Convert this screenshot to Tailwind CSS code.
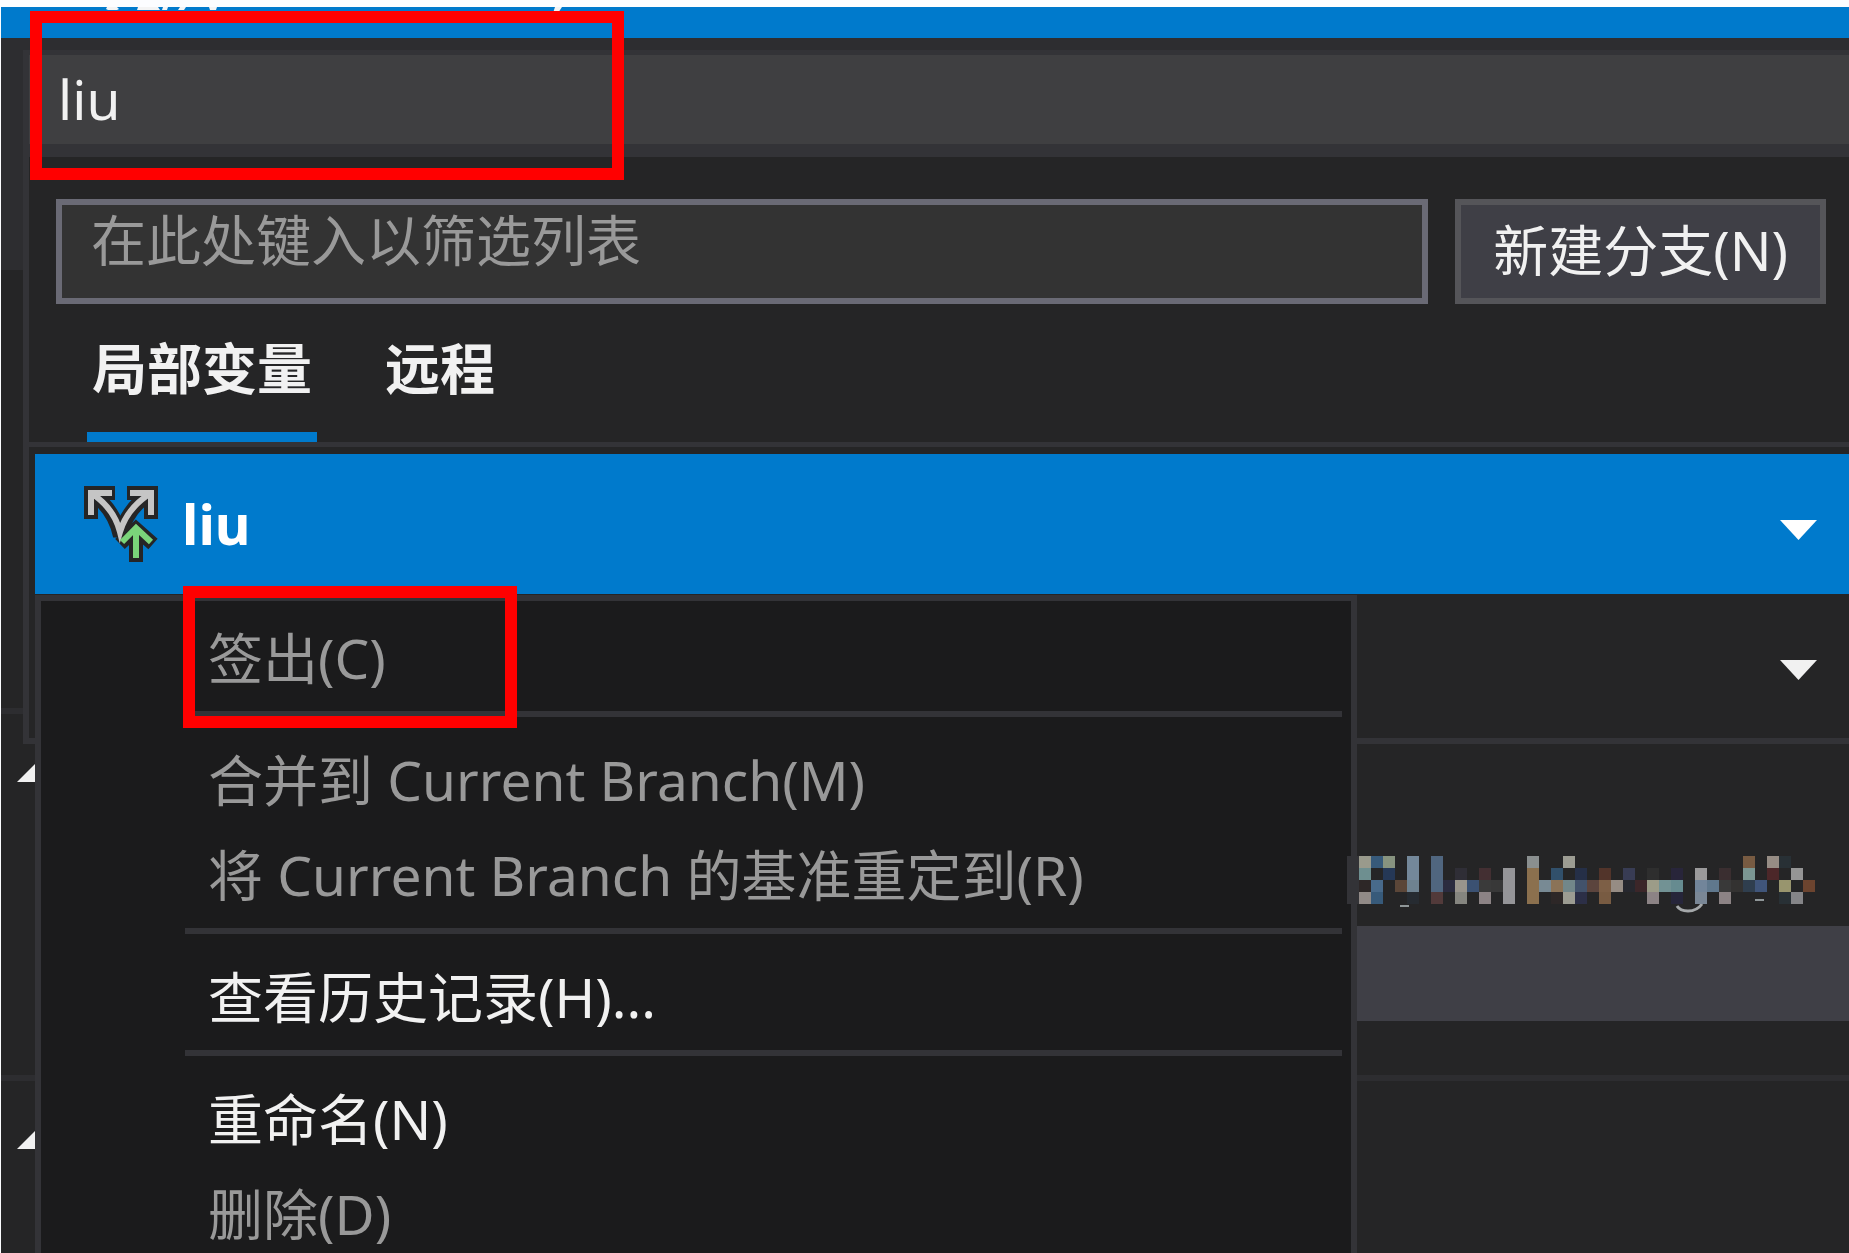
<!DOCTYPE html>
<html lang="zh-CN">
<head>
  <meta charset="UTF-8" />
  <meta name="viewport" content="width=device-width, initial-scale=1" />
  <title>liu - 分支</title>
  <script src="https://cdn.jsdelivr.net/npm/@tailwindcss/browser@4"></script>
</head>
<body class="h-screen overflow-hidden flex flex-col bg-[#fcfdff] pl-px text-[55px] leading-[72px] text-[#f1f1f1] font-['Noto_Sans','Noto_Sans_CJK_SC',sans-serif]">

  <!-- Title strip -->
  <header class="mt-[7px] h-[31px] shrink-0 bg-[#007acc]">
    <svg class="block" width="600" height="12" fill="#f4f4f4" aria-hidden="true">
      <path d="M106 0h10l2 2-2 1h-9l-2-1zM137 0h20l2 3h-23zM162 0h5l-1 3h-5zM179 0h6l-2 3h-6zM208 0h8l-1 3h-6zM554 0h7l-4 6h-5z" />
    </svg>
  </header>

  <main class="relative flex-1 min-h-0 overflow-hidden flex flex-col bg-[#252526]">

    <!-- Window behind the popup -->
    <div class="h-[232px] shrink-0 bg-[#2d2d30]"></div>
    <section class="h-[444px] shrink-0 border-b-6 border-[#2d2d30]"></section>
    <section class="h-[367px] shrink-0 border-b-6 border-[#2d2d30] pt-[50px]">
      <svg class="ml-4 block" width="26" height="26" viewBox="0 0 26 26" fill="#f1f1f1" aria-hidden="true"><path d="M0 18L18 0V18z" /></svg>
      <div class="mt-[136px] ml-9 h-[95px] bg-[#3f3f46]"></div>
    </section>
    <section class="flex-1 pt-[50px]">
      <svg class="ml-4 block" width="26" height="26" viewBox="0 0 26 26" fill="#f1f1f1" aria-hidden="true"><path d="M0 18L18 0V18z" /></svg>
    </section>

    <!-- Branch popup -->
    <div class="absolute top-3 left-[22px] right-0 bg-[#252526] border-t-5 border-l-6 border-b-6 border-[#333337]">
      <div class="h-[102px] bg-[#3f3f41] border-b-13 border-[#333337] pl-[29px] pt-2">liu</div>

      <div class="flex gap-[27px] pt-[42px] pl-[27px] pr-[23px]">
        <input type="text" aria-label="筛选列表" placeholder="在此处键入以筛选列表"
          class="flex-1 min-w-0 h-[105px] border-6 border-[#6a6a75] bg-[#333333] pl-[29px] pb-6 placeholder:text-[#999999] outline-none" />
        <button class="h-[105px] border-6 border-[#555559] bg-[#3f3f46] px-8 pb-1 whitespace-nowrap">新建分支(N)</button>
      </div>

      <div class="flex gap-[68px] pl-[58px] h-[138px]" role="tablist">
        <button role="tab" aria-selected="true" class="px-[5px] font-bold border-b-10 border-[#007acc]">局部变量</button>
        <button role="tab" aria-selected="false" class="font-bold border-b-10 border-transparent">远程</button>
      </div>

      <ul class="border-t-5 border-[#333337] pt-[7px] pl-[6px] pb-1">
        <li class="flex items-center h-[140px] bg-[#007acc] pl-[49px] pr-8 text-white">
          <svg width="74" height="76" viewBox="0 0 74 76" fill="none" aria-hidden="true">
            <g stroke="#252526" stroke-width="14" stroke-linejoin="miter">
              <path d="M7 33V7H31M43 7H67V33M7 7Q30 22 36 50Q43 22 67 7" />
              <path d="M36 58L52 43L69 58M52 43V76" />
            </g>
            <g stroke="#c5c5c5" stroke-width="6">
              <path d="M7 29V7H28M46 7H67V29M7 7Q30 22 36 46Q43 22 67 7" />
            </g>
            <g stroke="#7ad47a" stroke-width="6">
              <path d="M38 56L52 42L67 56M52 43V72" />
            </g>
          </svg>
          <span class="ml-6 flex-1 font-bold">liu</span>
          <button aria-label="liu" class="pt-3"><svg width="37" height="20" fill="#ffffff"><path d="M0 0H37L18.500 20z" /></svg></button>
        </li>
        <li class="flex items-center justify-end h-[140px] pr-8">
          <button aria-label="分支" class="pt-3"><svg width="37" height="20" fill="#f1f1f1"><path d="M0 0H37L18.500 20z" /></svg></button>
        </li>
      </ul>
    </div>

    <!-- Context menu -->
    <div role="menu" class="absolute top-[557px] left-[34px] w-[1322px] flex flex-col bg-[#1b1b1c] border-6 border-[#333337] pt-[9px] pr-[9px] pl-36">
      <button role="menuitem" disabled class="h-[95px] pl-[23px] text-left text-[#999999]">签出(C)</button>
      <hr class="mt-[6px] mb-[15px] border-t-6 border-[#333337]" />
      <button role="menuitem" disabled class="h-[95px] pl-[23px] text-left text-[#999999]">合并到 Current Branch(M)</button>
      <button role="menuitem" disabled class="h-[95px] pl-[23px] text-left text-[#999999]">将 Current Branch 的基准重定到(R)</button>
      <hr class="mt-[6px] mb-[15px] border-t-6 border-[#333337]" />
      <button role="menuitem" class="h-[95px] pl-[23px] text-left">查看历史记录(H)...</button>
      <hr class="mt-[6px] mb-[15px] border-t-6 border-[#333337]" />
      <button role="menuitem" class="h-[95px] pl-[23px] text-left">重命名(N)</button>
      <button role="menuitem" disabled class="h-[95px] pl-[23px] text-left text-[#999999]">删除(D)</button>
    </div>

    <!-- Pixelated account name -->
    <svg id="mosaic" class="absolute top-[818px] left-[1346px]" width="480" height="60" aria-hidden="true">
      <path d="M330 50Q333 55 341 55Q350 55 355 48" fill="none" stroke="#a5a8aa" stroke-width="3" />
      <path d="M53 50h9M408 44h9" stroke="#8f9698" stroke-width="2" />
    </svg>
  </main>

  <!-- Highlight frames -->
  <div class="absolute left-[30px] top-[11px] w-[594px] h-[169px] border-12 border-[#ff0000]"></div>
  <div class="absolute left-[183px] top-[586px] w-[334px] h-[142px] border-12 border-[#ff0000]"></div>

  <script>
    // one object per row: column -> colour
    const CELL = 12;
    const rows = [
      {0:'#333337',1:'#999a8c',2:'#375a7a',3:'#87937f',5:'#74889a',7:'#50667f',15:'#8a8f8f',18:'#9c9c92',33:'#785b42',35:'#968c84',36:'#283035'},
      {0:'#333337',1:'#6e8f90',3:'#253856',5:'#74889a',7:'#50667f',9:'#2f2e36',11:'#432f32',13:'#959598',15:'#8b704e',17:'#31506b',19:'#252f47',21:'#52342a',23:'#383c54',25:'#2e2e2e',27:'#28253a',29:'#9b9a9b',31:'#3a2e30',33:'#7b9692',35:'#4c2729',37:'#959595'},
      {0:'#333337',1:'#2d2727',2:'#486a8b',4:'#5b4638',5:'#6e8290',7:'#50667f',8:'#2b2b3f',9:'#99948c',10:'#3b5172',11:'#3a3a3a',12:'#383838',13:'#959598',15:'#8b704e',16:'#788a94',17:'#8b7357',18:'#72878a',19:'#42526b',20:'#5b443d',21:'#7d5f46',22:'#968c84',23:'#26272e',24:'#3c2629',25:'#9c9c88',26:'#729294',27:'#668b90',29:'#72859a',30:'#60788d',31:'#393939',32:'#333231',33:'#2f3e4e',34:'#40557a',36:'#98956e',38:'#6c442f'},
      {0:'#333337',1:'#918a87',2:'#375a7a',5:'#262b31',7:'#523a3a',9:'#85857f',11:'#8c8385',13:'#959598',15:'#8b704e',17:'#2d2727',18:'#9c9c92',19:'#2c2f47',21:'#785b42',25:'#8c8385',27:'#26253a',29:'#7a8796',31:'#8c8385',36:'#283035',37:'#858588'},
    ];
    const mosaic = document.getElementById('mosaic');

    rows.forEach((row, y) => {
      for (const x in row) {
        const rect = document.createElementNS('http://www.w3.org/2000/svg', 'rect');
        rect.setAttribute('x', x * CELL);
        rect.setAttribute('y', y * CELL);
        rect.setAttribute('width', CELL);
        rect.setAttribute('height', CELL);
        rect.setAttribute('fill', row[x]);
        mosaic.appendChild(rect);
      }
    });
  </script>
</body>
</html>
